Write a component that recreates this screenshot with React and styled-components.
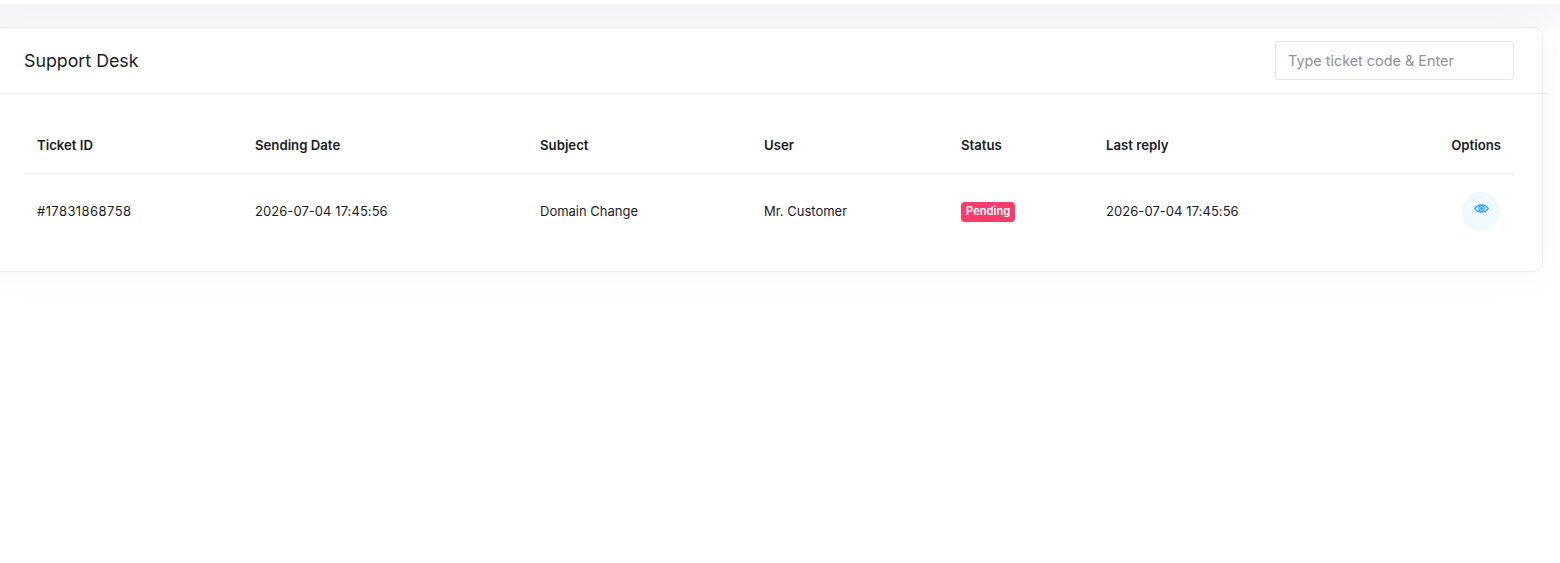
import React from 'react';
import styled, { createGlobalStyle } from 'styled-components';

const GlobalStyle = createGlobalStyle`
  html, body {
    margin: 0;
    padding: 0;
    background: #fff;
    overflow: hidden;
  }
  body {
    font-family: Inter, "Liberation Sans", sans-serif;
    color: #1b1b28;
  }
`;

const Page = styled.div`
  height: 559px;
  margin-top: 4px;
  padding-top: 23px;
  box-sizing: border-box;
  overflow: hidden;
  background: linear-gradient(180deg, #f5f5f9 0, #fafafc 20px, #fff 30px);
`;

const Card = styled.section`
  margin-left: -20px;
  margin-right: 17px;
  background: #fff;
  border: 1px solid #ebedf2;
  border-radius: 10px;
  box-shadow: 0 0 40px rgba(20, 20, 60, 0.04);
`;

const CardHeader = styled.header`
  height: 65px;
  margin-right: -6px;
  padding: 0 34px 0 43px;
  display: flex;
  align-items: center;
  justify-content: space-between;
  border-bottom: 1px solid #ebebeb;
`;

const Title = styled.h6`
  margin: 0;
  font-size: 17.8px;
  font-weight: 400;
  color: #1b1b28;
`;

const SearchInput = styled.input`
  width: 239px;
  height: 39px;
  box-sizing: border-box;
  padding: 0 12px;
  border: 1px solid #e2e5ec;
  border-radius: 3px;
  font-family: inherit;
  font-size: 14.4px;
  color: #1b1b28;
  outline: none;

  &::placeholder {
    color: #8f8f99;
    opacity: 1;
  }
`;

const CardBody = styled.div`
  padding: 26px 28px 22px 43px;
`;

const Table = styled.table`
  width: 1490px;
  border-collapse: collapse;
  table-layout: fixed;
  font-size: 13px;
`;

const HeadCell = styled.th`
  width: ${(p) => p.$width || 'auto'};
  height: 53px;
  padding: 0 13px 2px;
  box-sizing: border-box;
  border-bottom: 1px solid #edeff8;
  font-size: 13.2px;
  font-weight: 600;
  color: #1b1b28;
  text-align: ${(p) => (p.$right ? 'right' : 'left')};
`;

const Cell = styled.td`
  height: 76px;
  padding: 0 ${(p) => (p.$right ? '14px' : '13px')} 0 13px;
  box-sizing: border-box;
  font-weight: 400;
  color: #1b1b28;
  letter-spacing: ${(p) => p.$spacing || 'normal'};
  text-align: ${(p) => (p.$right ? 'right' : 'left')};
`;

const Badge = styled.span`
  display: inline-block;
  margin-top: 2px;
  padding: 3px 5px 4px;
  border-radius: 4px;
  background: #fb3b6c;
  color: #fff;
  font-size: 11.2px;
  font-weight: 600;
  line-height: 13px;
`;

const ViewButton = styled.a`
  display: inline-flex;
  align-items: center;
  justify-content: center;
  vertical-align: middle;
  width: 38px;
  height: 39px;
  padding: 0 0 5px 1px;
  box-sizing: border-box;
  border-radius: 50%;
  background: #eff9fe;
  color: #18a4fb;
`;

const EyeIcon = () => (
  <svg width="15" height="9" viewBox="0 0 15 9" fill="none" stroke="currentColor" strokeWidth="1.3">
    <path d="M0.7 4.5C2.4 2 4.8 0.8 7.5 0.8S12.6 2 14.3 4.5C12.6 7 10.2 8.2 7.5 8.2S2.4 7 0.7 4.5Z" />
    <circle cx="7.5" cy="4.5" r="2.7" strokeWidth="1.1" />
    <circle cx="7.5" cy="4.5" r="1.4" fill="currentColor" stroke="none" />
  </svg>
);

const columns = [
  { label: 'Ticket ID', width: '218px' },
  { label: 'Sending Date', width: '285px' },
  { label: 'Subject', width: '224px' },
  { label: 'User', width: '197px' },
  { label: 'Status', width: '145px' },
  { label: 'Last reply', width: '300px' },
  { label: 'Options', right: true },
];

export default function App() {
  return (
    <>
      <GlobalStyle />
      <Page>
        <Card>
          <CardHeader>
            <Title>Support Desk</Title>
            <SearchInput placeholder="Type ticket code & Enter" />
          </CardHeader>
          <CardBody>
            <Table>
              <thead>
                <tr>
                  {columns.map((c) => (
                    <HeadCell key={c.label} $width={c.width} $right={c.right}>
                      {c.label}
                    </HeadCell>
                  ))}
                </tr>
              </thead>
              <tbody>
                <tr>
                  <Cell $spacing="0.42px">#17831868758</Cell>
                  <Cell $spacing="0.06px">2026-07-04 17:45:56</Cell>
                  <Cell>Domain Change</Cell>
                  <Cell>Mr. Customer</Cell>
                  <Cell>
                    <Badge>Pending</Badge>
                  </Cell>
                  <Cell $spacing="0.06px">2026-07-04 17:45:56</Cell>
                  <Cell $right>
                    <ViewButton>
                      <EyeIcon />
                    </ViewButton>
                  </Cell>
                </tr>
              </tbody>
            </Table>
          </CardBody>
        </Card>
      </Page>
    </>
  );
}
